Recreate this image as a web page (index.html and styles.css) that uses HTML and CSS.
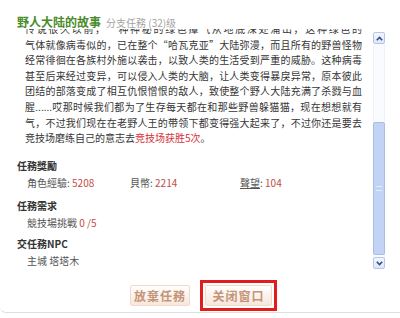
FILE: index.html
```html
<!DOCTYPE html>
<html lang="zh">
<head>
<meta charset="utf-8">
<title>野人大陆的故事</title>
<link rel="stylesheet" href="styles.css">
</head>
<body>
<div class="dialog">
  <div class="head">
    <span class="title">野人大陆的故事</span>
    <span class="sub">分支任務 (32)级</span>
  </div>
  <div class="body">
    <div class="viewport">
      <div class="content">
        <p class="story">
          <span class="ln">传说很久以前，一种神秘的绿色瘴气从地底深处涌出，这种绿色的</span>
          <span class="ln">气体就像病毒似的，已在整个“哈瓦克亚”大陆弥漫，而且所有的野兽怪物</span>
          <span class="ln">经常徘徊在各族村外施以袭击，以致人类的生活受到严重的威胁。这种病毒</span>
          <span class="ln">甚至后来经过变异，可以侵入人类的大脑，让人类变得暴戾异常，原本彼此</span>
          <span class="ln">团结的部落变成了相互仇恨憎恨的敌人，致使整个野人大陆充满了杀戮与血</span>
          <span class="ln">腥......哎那时候我们都为了生存每天都在和那些野兽躲猫猫，现在想想就有</span>
          <span class="ln">气，不过我们现在在老野人王的带领下都变得强大起来了，不过你还是要去</span>
          <span class="ln last">竞技场磨练自己的意志去<span class="link">竞技场获胜5次</span>。</span>
        </p>
        <div class="sec s1">
          <div class="sec-h">任務獎勵</div>
          <div class="row">
            <span>角色經驗: <span class="num">5208</span></span>
            <span>貝幣: <span class="num">2214</span></span>
            <span><span class="ul">聲望</span>: <span class="num">104</span></span>
          </div>
        </div>
        <div class="sec s2">
          <div class="sec-h">任務需求</div>
          <div class="row"><span>競技場挑戰 <span class="num">0 /5</span></span></div>
        </div>
        <div class="sec s3">
          <div class="sec-h">交任務NPC</div>
          <div class="row"><span>主城 塔塔木</span></div>
        </div>
      </div>
    </div>
    <div class="sb">
      <div class="sb-btn">
        <svg width="7" height="5" viewBox="0 0 7 5"><path d="M0.8 4.2 L3.5 1.4 L6.2 4.2" fill="none" stroke="#2b4c97" stroke-width="1.6"/></svg>
      </div>
      <div class="track">
        <div class="thumb">
          <span class="grip"></span>
        </div>
      </div>
      <div class="sb-btn">
        <svg width="7" height="5" viewBox="0 0 7 5"><path d="M0.8 0.8 L3.5 3.6 L6.2 0.8" fill="none" stroke="#2b4c97" stroke-width="1.6"/></svg>
      </div>
    </div>
  </div>
  <div class="actions">
    <span class="btn">放棄任務</span>
    <span class="close-wrap"><span class="btn close">关闭窗口</span></span>
  </div>
</div>
</body>
</html>
```
FILE: styles.css
```css
* {
  box-sizing: border-box;
  margin: 0;
  padding: 0;
}

body {
  width: 400px;
  height: 318px;
  background: #fff;
  overflow: hidden;
  font-family: "Noto Sans CJK SC", "Noto Sans CJK TC", sans-serif;
}

.dialog {
  height: 313px;
  display: flex;
  flex-direction: column;
  border-bottom: 1px solid #dedede;
  border-bottom-left-radius: 6px;
}

.head {
  height: 29px;
  padding: 14px 0 0 17px;
  display: flex;
  align-items: baseline;
  gap: 5px;
  white-space: nowrap;
  position: relative;
  z-index: 1;
  background: #fff;
}

.title {
  font-size: 12px;
  font-weight: bold;
  color: #4a8b2b;
  line-height: 15px;
}

.sub {
  font-size: 10px;
  color: #a3a3a3;
  line-height: 15px;
}

.body {
  height: 240px;
  display: flex;
}

.viewport {
  flex: 1;
  overflow: hidden;
  padding: 0 4px 0 17px;
}

.content {
  margin-top: -8px;
}

.story {
  padding-left: 8px;
  font-size: 10px;
  line-height: 15.6px;
  color: #363636;
}

.ln {
  display: block;
  text-align: justify;
  text-align-last: justify;
}

.ln.last {
  text-align-last: left;
}

.link {
  color: #d6333a;
}

.s1 { margin-top: 11px; }
.s2 { margin-top: 6px; }
.s3 { margin-top: 4px; }

.sec-h {
  font-size: 10px;
  font-weight: bold;
  color: #333;
  line-height: 18px;
}

.row {
  display: grid;
  grid-template-columns: 103px 110px auto;
  padding-left: 10px;
  font-size: 10px;
  line-height: 16px;
  color: #555;
}

.num {
  color: #c24b44;
}

.ul {
  text-decoration: underline;
}

.sb {
  width: 12px;
  margin: 3px 15px 0 7px;
  display: flex;
  flex-direction: column;
}

.sb-btn {
  height: 12px;
  border: 1px solid #b7c6e6;
  border-radius: 2px;
  background: linear-gradient(#f4f7fe, #dde6f8);
  display: flex;
  align-items: center;
  justify-content: center;
}

.track {
  flex: 1;
  background: #fafbfe;
  border-left: 1px solid #eef1f7;
  border-right: 1px solid #eef1f7;
  padding-top: 78px;
}

.thumb {
  height: 133px;
  margin: 0 -1px;
  background: #c3d3f6;
  border: 1px solid #a9bde9;
  border-radius: 2px;
  display: flex;
  align-items: center;
  justify-content: center;
}

.grip {
  width: 6px;
  height: 5px;
  border-top: 1px solid #e6eefc;
  border-bottom: 1px solid #e6eefc;
}

.actions {
  flex: 1;
  padding: 9px 0 0 130px;
  display: flex;
  align-items: center;
  gap: 10px;
}

.btn {
  height: 21px;
  width: 60px;
  border: 1px solid #efdacb;
  border-radius: 2px;
  background: linear-gradient(#ffffff, #f8e6da);
  color: #c49478;
  font-size: 12px;
  font-weight: bold;
  letter-spacing: 1px;
  display: flex;
  align-items: center;
  justify-content: center;
  white-space: nowrap;
}

.close-wrap {
  border: 3px solid #e31b1b;
  padding: 2px;
  display: flex;
}

.btn.close {
  width: 67px;
}
```
